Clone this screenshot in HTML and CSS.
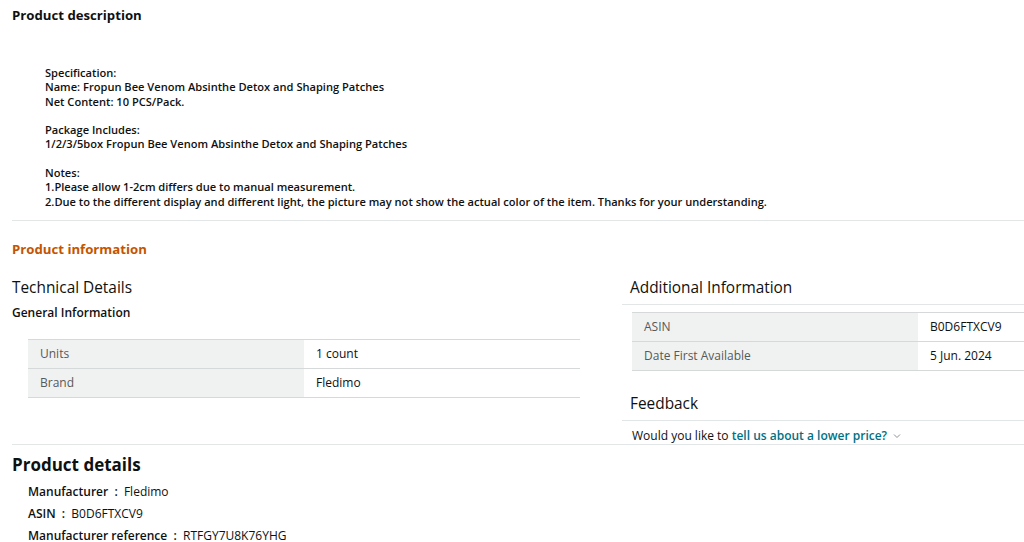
FILE: index.html
```html
<!DOCTYPE html>
<html lang="en">
<head>
<meta charset="utf-8">
<title>Product</title>
<link rel="stylesheet" href="styles.css">
</head>
<body>
<div class="page">
  <h2 class="desc-title">Product description</h2>
  <div class="desc">
    <p>Specification:<br>Name: Fropun Bee Venom Absinthe Detox and Shaping Patches<br>Net Content: 10 PCS/Pack.</p>
    <p>Package Includes:<br>1/2/3/5box Fropun Bee Venom Absinthe Detox and Shaping Patches</p>
    <p>Notes:<br>1.Please allow 1-2cm differs due to manual measurement.<br>2.Due to the different display and different light, the picture may not show the actual color of the item. Thanks for your understanding.</p>
  </div>
  <hr class="rule">
  <h2 class="info-title">Product information</h2>
  <div class="info-grid">
    <div class="col-left">
      <h3 class="sub-title">Technical Details</h3>
      <h4 class="group-title">General Information</h4>
      <table class="spec-table left-table">
        <tr><th>Units</th><td>1 count</td></tr>
        <tr><th>Brand</th><td>Fledimo</td></tr>
      </table>
    </div>
    <div class="col-right">
      <h3 class="sub-title boxed">Additional Information</h3>
      <table class="spec-table right-table">
        <tr><th>ASIN</th><td>B0D6FTXCV9</td></tr>
        <tr><th>Date First Available</th><td>5 Jun. 2024</td></tr>
      </table>
      <h3 class="sub-title boxed feedback-title">Feedback</h3>
      <div class="feedback">Would you like to <a href="#" class="link">tell us about a lower price?</a><svg class="chev" width="8" height="6" viewBox="0 0 8 6"><path d="M1 1.5 L4 4.5 L7 1.5" fill="none" stroke="#8d9096" stroke-width="1"/></svg></div>
    </div>
  </div>
  <hr class="rule rule2">
  <h2 class="details-title">Product details</h2>
  <ul class="details">
    <li><span class="lbl">Manufacturer &nbsp;:&nbsp;</span> Fledimo</li>
    <li><span class="lbl">ASIN &nbsp;:&nbsp;</span> B0D6FTXCV9</li>
    <li><span class="lbl">Manufacturer reference &nbsp;:&nbsp;</span> RTFGY7U8K76YHG</li>
  </ul>
</div>
</body>
</html>
```
FILE: styles.css
```css
* { box-sizing: border-box; }
html, body { margin: 0; padding: 0; background: #fff; }
body {
  font-family: "Open Sans", "Noto Sans", Arial, sans-serif;
  color: #0f1111;
  font-size: 12px;
}
.page { padding-left: 12px; }
h2, h3, h4, p { margin: 0; }
.desc-title {
  font-size: 13.2px;
  font-weight: 700;
  line-height: 20px;
  padding-top: 5px;
}
.desc {
  padding: 41px 0 0 33px;
  font-size: 11.1px;
  font-weight: 600;
  line-height: 14.3px;
}
.desc p { margin-bottom: 14.3px; }
.desc p:last-child { margin-bottom: 0; }
.rule {
  border: 0;
  border-top: 1px solid #e3e6e6;
  margin: 11px 0 0 0;
}
.info-title {
  color: #c45500;
  font-size: 13.2px;
  font-weight: 700;
  line-height: 20px;
  margin-top: 18px;
}
.info-grid {
  display: grid;
  grid-template-columns: 584px 1fr;
  column-gap: 26px;
  margin-top: 18px;
}
.sub-title {
  font-size: 15.4px;
  font-weight: 400;
  line-height: 22px;
}
.group-title {
  font-size: 12px;
  font-weight: 600;
  line-height: 18px;
  margin-top: 5px;
}
.spec-table {
  border-collapse: collapse;
  font-size: 12px;
}
.spec-table th, .spec-table td {
  border-top: 1px solid #d5d9d9;
  border-bottom: 1px solid #d5d9d9;
  height: 29px;
  padding: 0 12px;
  text-align: left;
  vertical-align: middle;
}
.spec-table th {
  background: #f0f2f2;
  color: #565959;
  font-weight: 400;
}
.spec-table td { color: #0f1111; }
.left-table { width: 552px; margin: 17px 0 0 16px; }
.left-table th { width: 276px; }
.right-table { width: calc(100% - 10px); margin: 7px 0 0 10px; }
.right-table th { width: 286px; }
.boxed {
  padding-left: 8px;
  padding-bottom: 5px;
  border-bottom: 1px solid #e3e6e6;
}
.feedback-title { margin-top: 22px; }
.feedback {
  padding: 7px 0 0 10px;
  font-size: 12px;
  line-height: 16px;
}
.link {
  color: #007185;
  font-weight: 600;
  text-decoration: none;
}
.chev { margin-left: 6px; vertical-align: 1px; }
.rule2 { margin-top: 0; }
.details-title {
  font-size: 17px;
  font-weight: 700;
  line-height: 26px;
  margin-top: 7px;
}
.details {
  list-style: none;
  margin: 3px 0 0 0;
  padding: 0 0 0 16px;
  font-size: 12px;
}
.details li { line-height: 22px; }
.lbl { font-weight: 600; }
```
